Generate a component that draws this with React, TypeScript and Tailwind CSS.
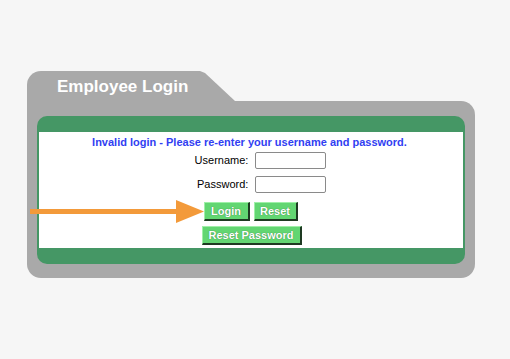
import React from "react";

const font = { fontFamily: '"Liberation Sans", Arial, sans-serif' };

function GreenButton({ label, className = "" }: { label: string; className?: string }) {
  return (
    <button
      type="button"
      className={
        "h-[19px] bg-[#62d672] text-white text-[11px] font-bold leading-none border-t border-l border-t-[#9ff0a8] border-l-[#9ff0a8] border-r-2 border-b-2 border-r-[#1e3a22] border-b-[#1e3a22] " +
        className
      }
      style={{ textShadow: "0 0 1px #2c6b35" }}
    >
      {label}
    </button>
  );
}

export default function App() {
  return (
    <div className="relative w-[510px] h-[359px] bg-[#f6f6f6] pt-[71px] pl-[27px] overflow-hidden" style={font}>
      {/* folder */}
      <div className="w-[448px]">
        {/* tab */}
        <div className="h-[30px] w-[208px] bg-[#a9a9a9] rounded-tl-[14px] [clip-path:polygon(0_0,173px_0,178px_2px,208px_100%,0_100%)] flex items-center pl-[30px] pt-[1px]">
          <span className="text-white text-[17px] font-bold">Employee Login</span>
        </div>
        {/* body */}
        <div className="bg-[#a9a9a9] rounded-tr-[14px] rounded-b-[14px] pt-[15px] px-[10px] pb-[14px]">
          <div className="bg-[#459765] rounded-[10px] pt-[16px] pb-[16px] px-[2px]">
            <div className="bg-white h-[116px] flex flex-col items-center pt-[3px]">
              <p className="text-[#3140f2] text-[11px] font-bold leading-[14px] ml-[-3px]">
                Invalid login - Please re-enter your username and password.
              </p>
              <div className="mt-[3px] grid grid-cols-[auto_auto] gap-x-[7px] gap-y-[7px] items-center ml-[19px]">
                <span className="text-[11px] leading-[17px] text-black text-right">Username:</span>
                <input className="w-[71px] h-[17px] border border-[#8a8a8a] rounded-[2px] bg-white" />
                <span className="text-[11px] leading-[17px] text-black text-right">Password:</span>
                <input type="password" className="w-[71px] h-[17px] border border-[#8a8a8a] rounded-[2px] bg-white" />
              </div>
              <div className="mt-[9px] flex gap-[4px] ml-[-1px]">
                <GreenButton label="Login" className="w-[46px]" />
                <GreenButton label="Reset" className="w-[44px]" />
              </div>
              <div className="mt-[5px] flex ml-[1px]">
                <GreenButton label="Reset Password" className="w-[100px]" />
              </div>
            </div>
          </div>
        </div>
      </div>

      {/* arrow pointing at Login */}
      <svg className="absolute left-[30px] top-[199px]" width="176" height="26" viewBox="0 0 176 26">
        <rect x="0" y="10" width="150" height="5" fill="#f39a3a" />
        <polygon points="146,1 174,12.5 146,24" fill="#f39a3a" />
      </svg>
    </div>
  );
}
